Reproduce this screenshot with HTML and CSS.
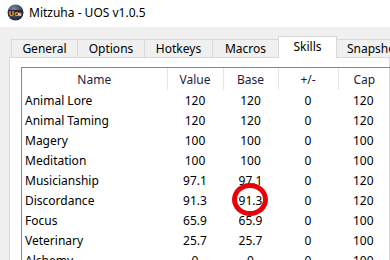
FILE: index.html
```html
<!DOCTYPE html>
<html lang="en">
<head>
  <meta charset="UTF-8">
  <meta name="viewport" content="width=device-width, initial-scale=1.0">
  <title>Mitzuha - UOS v1.0.5</title>
  <link rel="stylesheet" href="styles.css">
</head>
<body>

  <div class="titlebar">
    <svg class="logo" width="17" height="17" viewBox="0 0 17 17">
      <defs>
        <radialGradient id="ball" cx="0.4" cy="0.3" r="0.7">
          <stop offset="0" stop-color="#7d8a9e"/>
          <stop offset="1" stop-color="#1d2536"/>
        </radialGradient>
      </defs>
      <circle cx="8.5" cy="8.5" r="8" fill="url(#ball)"/>
      <rect x="1" y="6" width="15" height="6" fill="#202838"/>
      <text x="1.5" y="11.5" font-family="DejaVu Sans, sans-serif" font-size="7" font-weight="bold" fill="#f29a1c">Uo</text>
      <text x="11" y="11.5" font-family="DejaVu Sans, sans-serif" font-size="6" font-weight="bold" fill="#e8e8e8">s</text>
    </svg>
    <span class="title">Mitzuha - UOS v1.0.5</span>
  </div>

  <div class="client">
    <div class="tabs">
      <div class="tab">General</div>
      <div class="tab">Options</div>
      <div class="tab">Hotkeys</div>
      <div class="tab">Macros</div>
      <div class="tab active">Skills</div>
      <div class="tab">Snapshots</div>
    </div>

    <div class="panel">
      <div class="listview">
        <table>
          <colgroup>
            <col class="c-name">
            <col class="c-value">
            <col class="c-base">
            <col class="c-mod">
            <col class="c-cap">
          </colgroup>
          <thead>
            <tr>
              <th>Name</th>
              <th>Value</th>
              <th>Base</th>
              <th>+/-</th>
              <th>Cap</th>
            </tr>
          </thead>
          <tbody>
            <tr><td>Animal Lore</td><td>120</td><td>120</td><td>0</td><td>120</td></tr>
            <tr><td>Animal Taming</td><td>120</td><td>120</td><td>0</td><td>120</td></tr>
            <tr><td>Magery</td><td>100</td><td>100</td><td>0</td><td>100</td></tr>
            <tr><td>Meditation</td><td>100</td><td>100</td><td>0</td><td>100</td></tr>
            <tr><td>Musicianship</td><td>97.1</td><td>97.1</td><td>0</td><td>120</td></tr>
            <tr><td>Discordance</td><td>91.3</td><td class="marked">91.3<span class="ring"></span></td><td>0</td><td>120</td></tr>
            <tr><td>Focus</td><td>65.9</td><td>65.9</td><td>0</td><td>100</td></tr>
            <tr><td>Veterinary</td><td>25.7</td><td>25.7</td><td>0</td><td>100</td></tr>
            <tr><td>Alchemy</td><td>0</td><td>0</td><td>0</td><td>100</td></tr>
          </tbody>
        </table>
      </div>
    </div>
  </div>

</body>
</html>
```

FILE: styles.css
```css
body {
  margin: 0;
  width: 390px;
  height: 260px;
  overflow: hidden;
  font-family: "Noto Sans", "Open Sans", sans-serif;
  font-size: 12px;
  color: #000;
  background: #f0f0f0;
}

.titlebar {
  height: 27px;
  background: #fff;
  display: flex;
  align-items: center;
  padding-left: 7px;
  gap: 5px;
}

.logo {
  margin-top: -2px;
}

.title {
  font-size: 12px;
  margin-top: -2px;
}

.client {
  padding: 9px 0 0 9px;
  overflow: hidden;
}

.tabs {
  display: flex;
  align-items: flex-end;
  padding-left: 2px;
  height: 21px;
  position: relative;
  z-index: 1;
}

.tab {
  height: 18px;
  line-height: 17px;
  box-sizing: border-box;
  border: 1px solid #d9d9d9;
  border-bottom: none;
  border-right: none;
  background: #f0f0f0;
  text-align: center;
  white-space: nowrap;
  flex: none;
}

.tab:nth-child(1) { width: 66px; }
.tab:nth-child(2) { width: 67px; }
.tab:nth-child(3) { width: 68px; }
.tab:nth-child(4) { width: 66px; }
.tab:nth-child(6) { width: 66px; border-left: none; overflow: hidden; text-align: left; padding-left: 10px; }

.tab.active {
  width: 59px;
  height: 22px;
  margin-bottom: -1px;
  line-height: 19px;
  background: #fff;
  border-right: 1px solid #d9d9d9;
}

.panel {
  background: #fff;
  border: 1px solid #d9d9d9;
  height: 300px;
  padding: 9px 0 0 11px;
}

.listview {
  border: 1px solid #828790;
  border-right: none;
  width: 400px;
  height: 300px;
}

table {
  border-collapse: collapse;
  table-layout: fixed;
  width: 400px;
}

.c-name { width: 145px; }
.c-value { width: 56px; }
.c-base { width: 55px; }
.c-mod { width: 60px; }
.c-cap { width: 84px; }

th {
  height: 22px;
  padding: 0;
  font-weight: normal;
  color: #1c1c3c;
  border-right: 1px solid #e5e5e5;
  vertical-align: middle;
}

td {
  height: 20px;
  padding: 0;
  text-align: center;
  vertical-align: middle;
}

td:first-child {
  text-align: left;
  padding-left: 3px;
}

td:nth-child(5),
th:nth-child(5) {
  text-align: left;
  padding-left: 15px;
}

.marked {
  position: relative;
}

.ring {
  position: absolute;
  left: 9px;
  top: -7px;
  width: 26px;
  height: 23px;
  border: 5px solid #ea0009;
  border-radius: 50%;
}
```
